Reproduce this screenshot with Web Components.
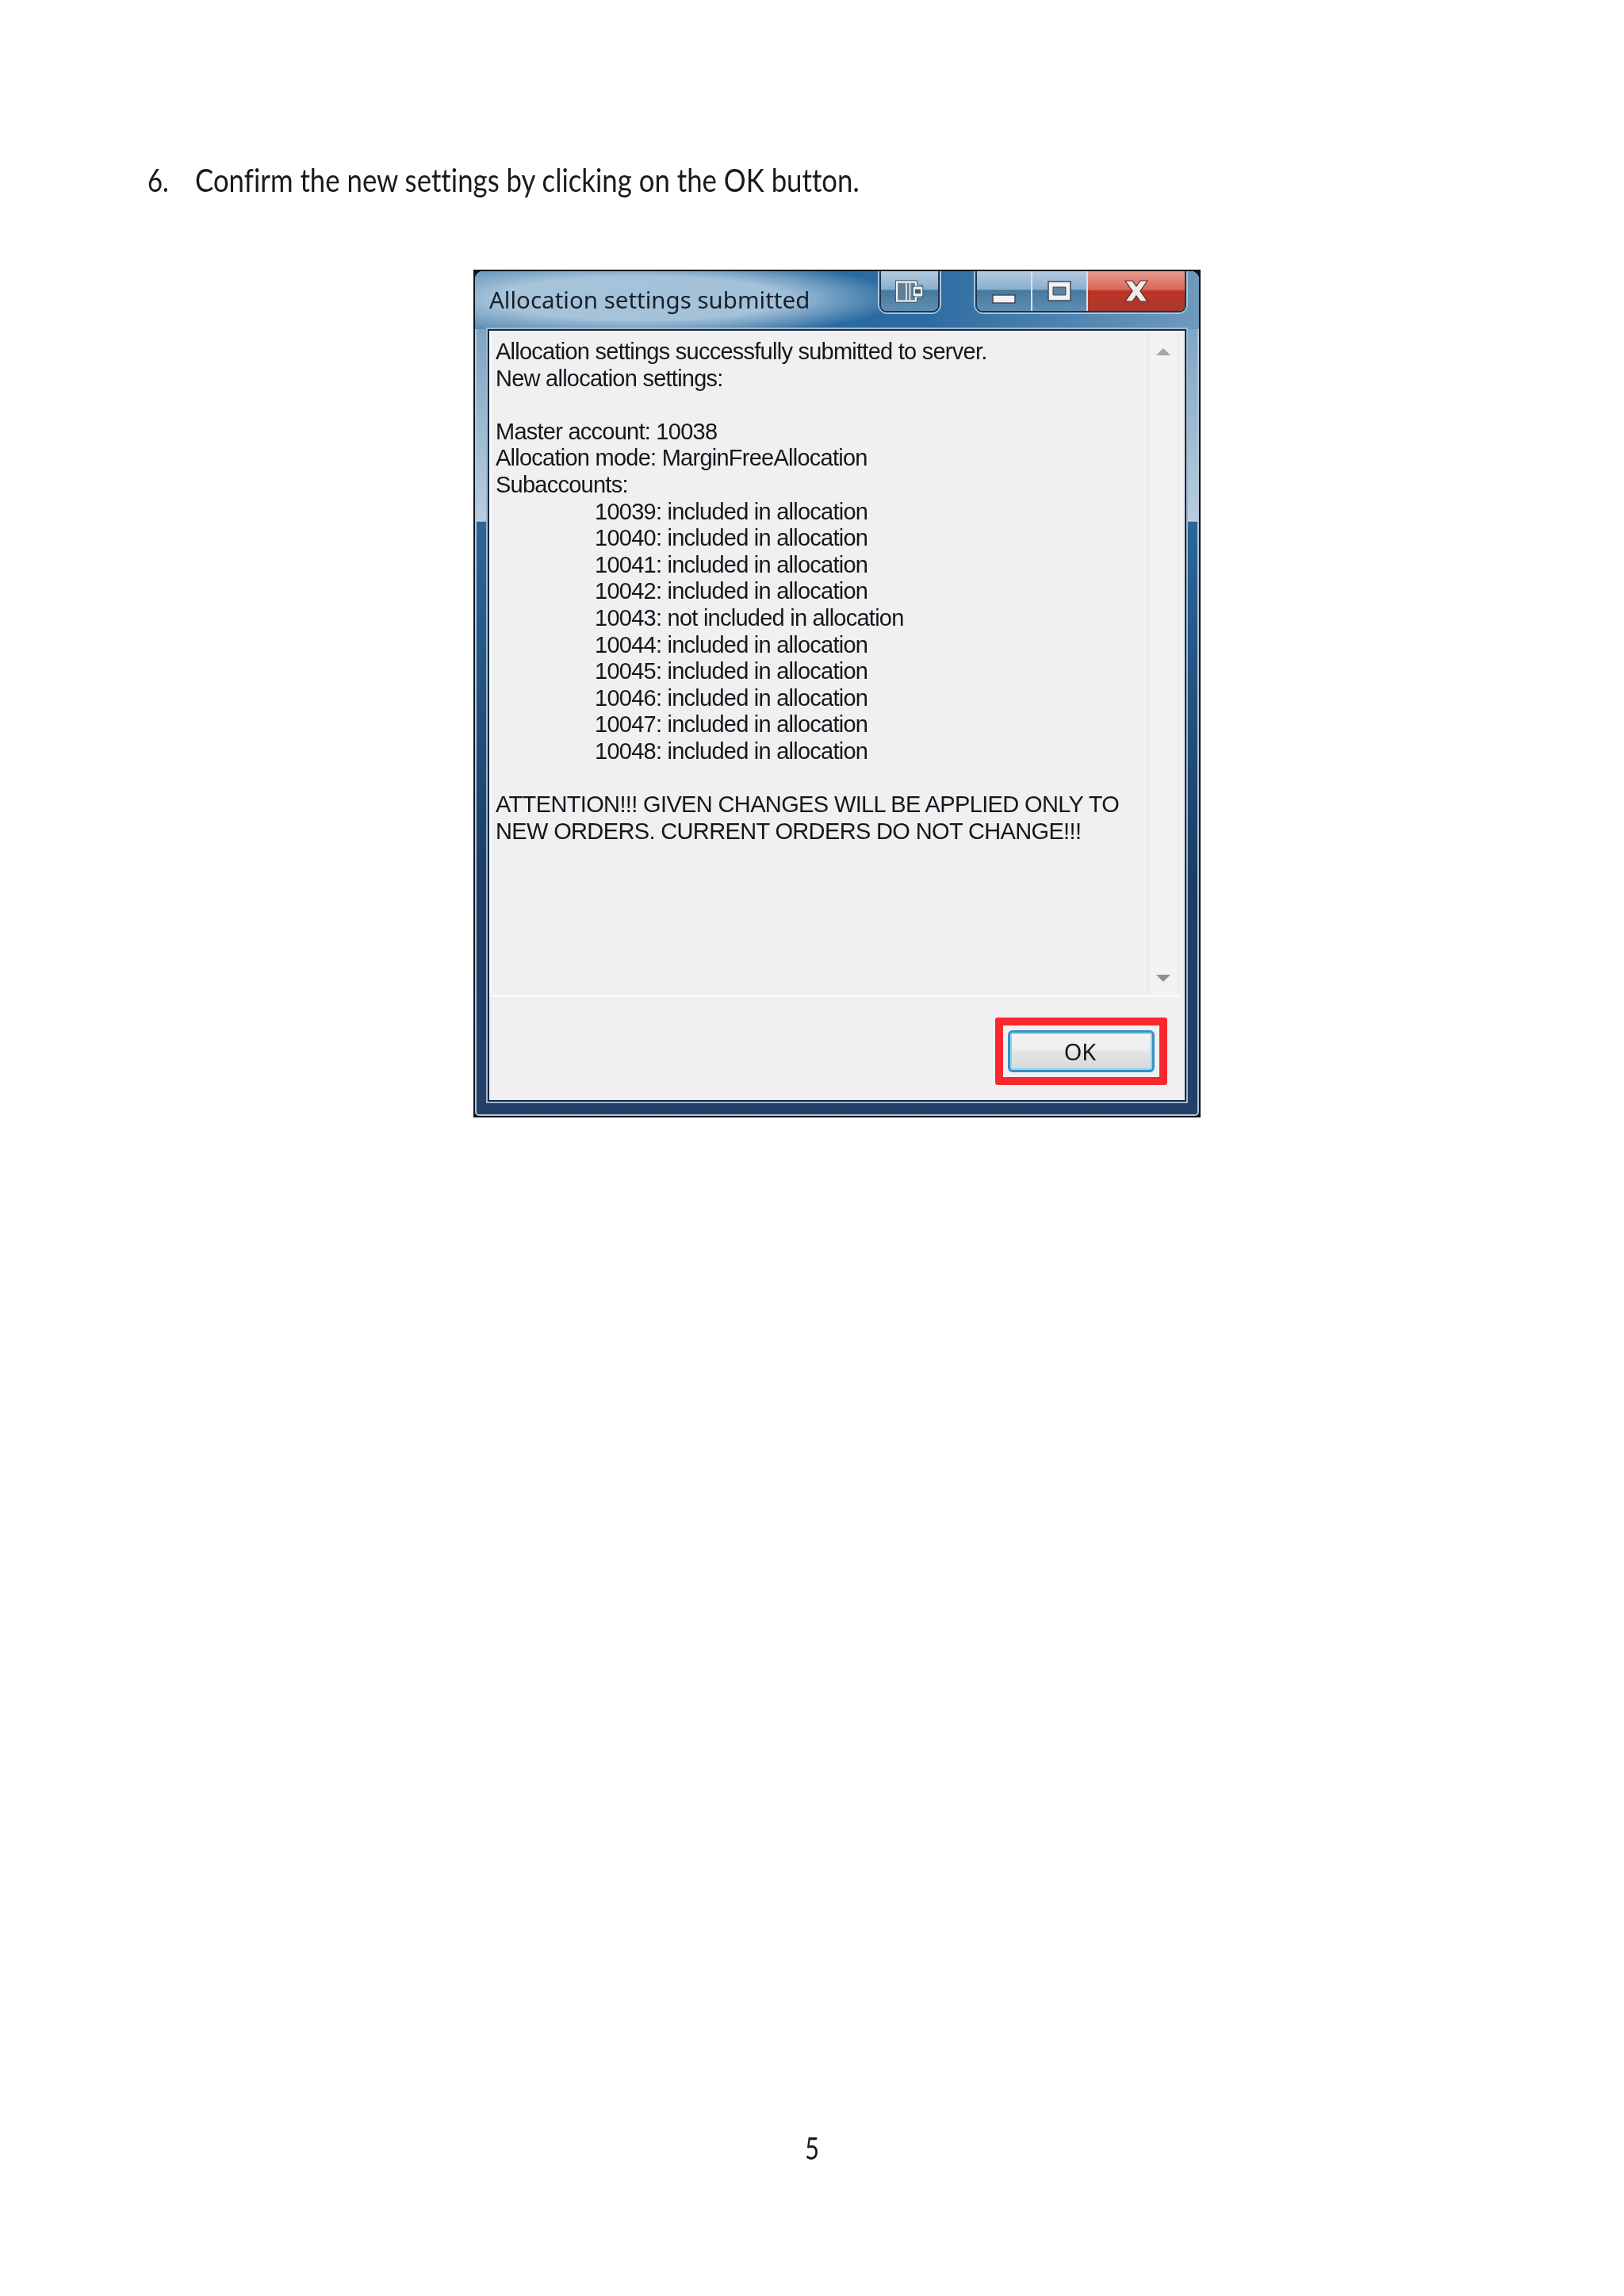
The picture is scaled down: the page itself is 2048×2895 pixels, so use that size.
<!DOCTYPE html>
<html>
<head>
<meta charset="utf-8">
<title>Allocation settings</title>
<style>
  html, body { margin: 0; background: #fff; }
</style>
</head>
<body>
<doc-page number="5">
  <step-line number="6.">Confirm the new settings by clicking on the OK button.</step-line>
  <vista-dialog heading="Allocation settings submitted">
    <msg-line>Allocation settings successfully submitted to server.</msg-line>
    <msg-line>New allocation settings:</msg-line>
    <msg-line></msg-line>
    <msg-line>Master account: 10038</msg-line>
    <msg-line>Allocation mode: MarginFreeAllocation</msg-line>
    <msg-line>Subaccounts:</msg-line>
    <msg-line indent>10039: included in allocation</msg-line>
    <msg-line indent>10040: included in allocation</msg-line>
    <msg-line indent>10041: included in allocation</msg-line>
    <msg-line indent>10042: included in allocation</msg-line>
    <msg-line indent>10043: not included in allocation</msg-line>
    <msg-line indent>10044: included in allocation</msg-line>
    <msg-line indent>10045: included in allocation</msg-line>
    <msg-line indent>10046: included in allocation</msg-line>
    <msg-line indent>10047: included in allocation</msg-line>
    <msg-line indent>10048: included in allocation</msg-line>
    <msg-line></msg-line>
    <msg-line caps>ATTENTION!!! GIVEN CHANGES WILL BE APPLIED ONLY TO</msg-line>
    <msg-line caps>NEW ORDERS. CURRENT ORDERS DO NOT CHANGE!!!</msg-line>
  </vista-dialog>
</doc-page>
<script>
customElements.define('doc-page', class extends HTMLElement {
  constructor(){
    super();
    this.attachShadow({mode: 'open'}).innerHTML = `
    <style>
      :host {
        display: flex;
        flex-direction: column;
        box-sizing: border-box;
        width: 2048px;
        height: 2895px;
        padding: 201px 0 0 0;
        background: #fff;
        color: #1a1a1a;
        font-family: "Lato", "Liberation Sans", sans-serif;
      }
      .num {
        margin-top: auto;
        padding-bottom: 168px;
        text-align: center;
        font-size: 38px;
        line-height: 38px;
        transform: scaleX(.82);
      }
    </style>
    <slot></slot>
    <div class="num">${this.getAttribute('number')}</div>
    `;
  }
});

customElements.define('step-line', class extends HTMLElement {
  constructor(){
    super();
    this.attachShadow({mode: 'open'}).innerHTML = `
    <style>
      :host {
        display: flex;
        height: 52px;
        padding-left: 186px;
        font-size: 41px;
        font-variant-ligatures: none;
        line-height: 52px;
        white-space: nowrap;
      }
      .n { width: 60px; transform-origin: 0 50%; transform: scaleX(.8); }
      .t { transform-origin: 0 50%; transform: scaleX(.848); }
    </style>
    <div class="n">${this.getAttribute('number')}</div>
    <div class="t"><slot></slot></div>
    `;
  }
});

customElements.define('msg-line', class extends HTMLElement {
  constructor(){
    super();
    const pad = this.hasAttribute('indent') ? '125px' : '0';
    const track = this.hasAttribute('caps') ? '-.64px' : '-.75px';
    this.attachShadow({mode: 'open'}).innerHTML = `
    <style>
      :host {
        display: block;
        height: 33.6px;
        padding-left: ${pad};
        letter-spacing: ${track};
        line-height: 33.6px;
        white-space: nowrap;
      }
    </style>
    <slot></slot>
    `;
  }
});

customElements.define('caption-buttons', class extends HTMLElement {
  constructor(){
    super();
    this.attachShadow({mode: 'open'}).innerHTML = `
    <style>
      :host { display: flex; align-items: flex-start; gap: 45px; }
      .group {
        display: flex;
        height: 50px;
        border: 2px solid #1d3550;
        border-top: 0;
        border-radius: 0 0 9px 9px;
        box-shadow: 0 2px 0 #a9c6dc, 2px 0 0 #a9c6dc, -2px 0 0 #a9c6dc;
        overflow: hidden;
      }
      .btn {
        display: flex;
        align-items: center;
        justify-content: center;
        background: linear-gradient(#b3cbe0 0, #8aaecb 46%, #46799f 48%, #5f8eb4 100%);
      }
      .btn + .btn { border-left: 2px solid #d4e2ec; }
      .wide { width: 72px; }
      .min { width: 68px; }
      .max { width: 68px; }
      .close {
        width: 122px;
        background: linear-gradient(#e69b90 0, #d9675a 46%, #bf3222 50%, #a83a30 100%);
      }
      svg { display: block; }
    </style>
    <div class="group">
      <div class="btn wide">
        <svg width="39" height="29" viewBox="0 0 42 32">
          <path d="M1 1H31V7H38V25H31V31H1Z" fill="#f2f5f7" stroke="#33475a" stroke-width="1"/>
          <path d="M4 4H28V28H4Z" fill="#5e7f98"/>
          <path d="M15 4H17V28H15ZM20 4H22V28H20Z" fill="#dfe7ec"/>
          <path d="M25 9H39V23H25Z" fill="#f2f5f7" stroke="#33475a"/>
          <path d="M28 13H36V19H28Z" fill="#3f5a70"/>
        </svg>
      </div>
    </div>
    <div class="group">
      <div class="btn min">
        <svg width="30" height="34" viewBox="0 0 30 34">
          <path d="M1 22H29V32H1Z" fill="#f2f2f4" stroke="#3b4a5c" stroke-width="1.5"/>
        </svg>
      </div>
      <div class="btn max">
        <svg width="30" height="26" viewBox="0 0 30 26">
          <path d="M1 1H29V25H1Z" fill="#f2f2f4" stroke="#3b4a5c" stroke-width="1.5"/>
          <path d="M7 8H23V18H7Z" fill="#5f84a0" stroke="#3b4a5c"/>
        </svg>
      </div>
      <div class="btn close">
        <svg width="30" height="28" viewBox="0 0 30 28">
          <path d="M1 1H10L15 8L20 1H29L20 14L29 27H20L15 20L10 27H1L10 14Z" fill="#f2ece8" stroke="#4d2a26" stroke-width="1.2"/>
        </svg>
      </div>
    </div>
    `;
  }
});

customElements.define('scroll-bar', class extends HTMLElement {
  constructor(){
    super();
    this.attachShadow({mode: 'open'}).innerHTML = `
    <style>
      :host {
        display: flex;
        flex-direction: column;
        align-items: center;
        justify-content: space-between;
        box-sizing: border-box;
        width: 40px;
        padding: 22px 0 16px;
        background: #f2f2f3;
        border-left: 2px solid #e9e9ea;
        border-right: 2px solid #e9e9ea;
      }
      i { width: 0; height: 0; border-left: 9px solid transparent; border-right: 9px solid transparent; }
      .up { border-bottom: 9px solid #a3a6a9; }
      .down { border-top: 9px solid #8d9093; }
    </style>
    <i class="up"></i><i class="down"></i>
    `;
  }
});

customElements.define('vista-dialog', class extends HTMLElement {
  constructor(){
    super();
    this.attachShadow({mode: 'open'}).innerHTML = `
    <style>
      :host {
        display: block;
        box-sizing: border-box;
        width: 917px;
        height: 1069px;
        margin: 87px 0 0 597px;
        padding: 2px;
        background: #0b1520;
        color: #16161a;
        filter: blur(.5px);
      }
      .frame {
        display: flex;
        flex-direction: column;
        height: 100%;
        border-radius: 10px 10px 5px 5px;
        background: linear-gradient(#6d9abd 0, #b9cddd 29.6%, #2b6699 29.7%, #1b3d66 72%, #24406a 100%);
        box-shadow: inset 0 0 0 2px #b5c6d6;
        overflow: hidden;
      }
      .bar {
        display: flex;
        align-items: flex-start;
        flex: none;
        height: 73px;
        padding: 0 16px 0 18px;
        background:
          radial-gradient(ellipse 330px 50px at 210px 34px, rgba(175,202,222,.9) 55%, rgba(175,202,222,0) 100%),
          linear-gradient(96deg, #5c8db3 0, #2a6aa2 50%, #2c6ba2 62%, #6f9abd 100%);
      }
      .title {
        flex: 1;
        font-family: "Noto Sans", "DejaVu Sans", sans-serif;
        font-size: 29.5px;
        line-height: 71px;
        color: #18202a;
        white-space: nowrap;
      }
      .body {
        flex: 1;
        display: flex;
        flex-direction: column;
        margin: 0 16px 18px 16px;
        border: 2px solid #17293d;
        outline: 2px solid #9fbad0;
        background: #f0f0f2;
      }
      .text {
        flex: 1;
        display: flex;
        border-bottom: 3px solid #fafafa;
        border-left: 3px solid #f8fafc;
        margin-right: 7px;
      }
      .msg {
        flex: 1;
        padding: 10px 0 0 5px;
        font-family: "Liberation Sans", Arial, sans-serif;
        font-size: 29px;
      }
      .foot {
        flex: none;
        height: 130px;
        box-sizing: border-box;
        display: flex;
        justify-content: flex-end;
        padding: 26px 22px 0 0;
      }
      .mark {
        box-sizing: border-box;
        width: 217px;
        height: 85px;
        padding: 6px;
        border: 10px solid #f9282f;
        border-radius: 3px;
      }
      button {
        display: block;
        width: 100%;
        height: 100%;
        padding: 0 3px 0 0;
        border: 3px solid #3a8fc0;
        border-radius: 6px;
        box-shadow: inset 0 0 0 2px #7fdcf5;
        background: linear-gradient(#f3f2f3 0, #f0eeef 44%, #e4e3e3 54%, #dad9d9 100%);
        color: #16161a;
        font-family: "Noto Sans", "DejaVu Sans", sans-serif;
        font-size: 29px;
      }
    </style>
    <div class="frame">
      <div class="bar">
        <div class="title">${this.getAttribute('heading')}</div>
        <caption-buttons></caption-buttons>
      </div>
      <div class="body">
        <div class="text">
          <div class="msg"><slot></slot></div>
          <scroll-bar></scroll-bar>
        </div>
        <div class="foot">
          <div class="mark"><button>OK</button></div>
        </div>
      </div>
    </div>
    `;
  }
});
</script>
</body>
</html>
